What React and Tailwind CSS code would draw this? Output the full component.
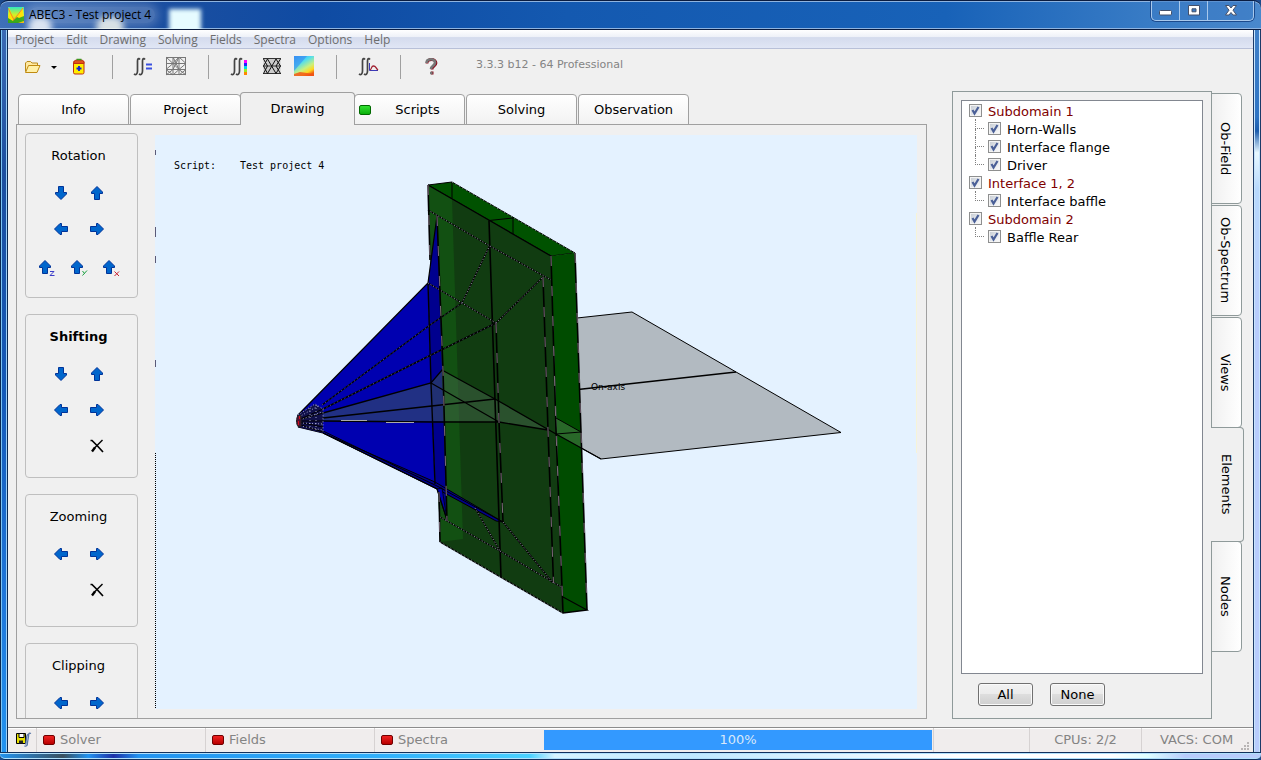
import { useState } from 'react';
import clsx from 'clsx';

const MENU = ['Project', 'Edit', 'Drawing', 'Solving', 'Fields', 'Spectra', 'Options', 'Help'];

const TABS = ['Info', 'Project', 'Drawing', 'Scripts', 'Solving', 'Observation'];

const SIDE_TABS = ['Ob-Field', 'Ob-Spectrum', 'Views', 'Elements', 'Nodes'];

const TREE = [
  { label: 'Subdomain 1', children: ['Horn-Walls', 'Interface flange', 'Driver'] },
  { label: 'Interface 1, 2', children: ['Interface baffle'] },
  { label: 'Subdomain 2', children: ['Baffle Rear'] },
];

const ALL_ITEMS = TREE.flatMap((g) => [g.label, ...g.children]);

/* ---------- icons ---------- */

const ARROWS = {
  up: '7,0.5 12.5,6 12.5,7.5 9.5,7.5 9.5,13.5 4.5,13.5 4.5,7.5 1.5,7.5 1.5,6',
  down: '7,13.5 12.5,8 12.5,6.5 9.5,6.5 9.5,0.5 4.5,0.5 4.5,6.5 1.5,6.5 1.5,8',
  left: '0.5,7 6,1.5 7.5,1.5 7.5,4.5 13.5,4.5 13.5,9.5 7.5,9.5 7.5,12.5 6,12.5',
  right: '13.5,7 8,1.5 6.5,1.5 6.5,4.5 0.5,4.5 0.5,9.5 6.5,9.5 6.5,12.5 8,12.5',
};

function Arrow({ dir }) {
  return (
    <svg width="14" height="14" viewBox="0 0 14 14">
      <polygon points={ARROWS[dir]} fill="#0066cc" stroke="#003399" />
    </svg>
  );
}

const AXIS = {
  z: { d: 'M11 11.5h4l-4 4h4.5', color: '#3c3cc8' },
  y: { d: 'M11.5 11l2 2.5M16 10.5l-4.500 5', color: '#1aa040' },
  x: { d: 'M11.5 11.5l4.5 4.5M16 11.5l-4.500 4.500', color: '#c82030' },
};

function AxisArrow({ axis }) {
  return (
    <svg width="18" height="18" viewBox="0 0 18 18" className="ml-0.5">
      <polygon points="6,0.5 11.5,6 11.5,7.5 8.5,7.5 8.5,13.5 3.5,13.5 3.5,7.5 0.5,7.5 0.5,6" fill="#0066cc" stroke="#003399" />
      <path d={AXIS[axis].d} fill="none" stroke={AXIS[axis].color} />
    </svg>
  );
}

function ResetIcon() {
  return (
    <svg width="14" height="14" viewBox="0 0 14 14" fill="none" stroke="#000">
      <path d="M0.500 1.500h1.500l5 5 6 6.500" strokeWidth="1.700" />
      <path d="M12.500 1L7 6.500l-3 3" strokeWidth="1.400" />
      <path d="M5 8.500l-3 4" strokeWidth="2.400" />
    </svg>
  );
}

function Integral() {
  return (
    <g fill="none" stroke="#444" strokeWidth="1.700">
      <path d="M8 3.500c-1.500-2-2.500-.5-2.500 1.500v10c0 3-1.500 4.500-3.500 3" />
      <path d="M13 3.500c-1.500-2-2.500-.5-2.500 1.500v10c0 3-1.500 4.500-3.500 3" />
    </g>
  );
}

function FolderIcon() {
  return (
    <svg width="22" height="22" viewBox="0 0 22 22" strokeLinejoin="round">
      <path d="M3.500 15.500V7l1.500-1.500h3.500L10 7h5.500v2.500" fill="#ffe9a0" stroke="#b98a1c" />
      <path d="M3.500 16.500L6.500 9.500h11.500l-3 7z" fill="#fff0a8" stroke="#c08a10" />
    </svg>
  );
}

function JarIcon() {
  return (
    <svg width="22" height="22" viewBox="0 0 22 22">
      <rect x="5.500" y="5" width="10.500" height="13" rx="1.500" fill="#ffee00" stroke="#c03010" />
      <path d="M6 6c0-3 10-3 10 0v1.500H6z" fill="#e05020" stroke="#c03010" />
      <path d="M8.500 3.500h5" stroke="#3a9a20" strokeWidth="1.500" />
      <path d="M11 10v5M8.500 12.500h5" stroke="#1020d0" strokeWidth="1.800" />
    </svg>
  );
}

function SolveIcon() {
  return (
    <svg width="22" height="22" viewBox="0 0 22 22">
      <Integral />
      <path d="M14 8.500h6M14 12.500h6" stroke="#3a50e0" strokeWidth="1.800" />
    </svg>
  );
}

function MeshIcon() {
  return (
    <svg width="22" height="22" viewBox="0 0 22 22" fill="none" stroke="#777">
      <path d="M1 1.500h20M1 7.500h20M1 13.500h20M1 18.500h20M1.500 1v18M8 1v18M14 1v18M20.500 1v18" />
      <path d="M1 1l7 6.500 6-6.500 7 6.500-7 6-6-6-7 6 7 5.500 6-5.500 7 5.500M1 19l7-5.500M14 1l-6 12.500M8 1l6 12.500M21 13.500l-7 5.500" />
    </svg>
  );
}

function FieldIcon() {
  return (
    <svg width="22" height="22" viewBox="0 0 22 22">
      <Integral />
      <rect x="15" y="4" width="3" height="3" fill="#f0f" />
      <rect x="15" y="7" width="3" height="3" fill="#22f" />
      <rect x="15" y="10" width="3" height="3" fill="#0dd" />
      <rect x="15" y="13" width="3" height="3" fill="#9e2" />
      <rect x="15" y="16" width="3" height="3" fill="#f80" />
    </svg>
  );
}

function TrianglesIcon() {
  return (
    <svg width="22" height="22" viewBox="0 0 22 22" stroke="#111" strokeWidth="1.200">
      <path d="M2.500 2.500h17v15h-17z" fill="#ccc" stroke="none" />
      <path d="M2 2.500h18M2 10h18M2 17.500h18" stroke="#333" />
      <path d="M2.500 3l4 7-4 7.500M2.500 10l4-7 8.500 14.500 4.500-7.500-4.500-7L6.500 17.500l-4-7.500M19.500 3L15 10l4.500 7.500" fill="none" strokeWidth="1" />
    </svg>
  );
}

function MapIcon() {
  return (
    <svg width="22" height="22" viewBox="0 0 22 22">
      <defs>
        <linearGradient id="map" x1="0.1" y1="0" x2="0.7" y2="1">
          <stop offset="0" stopColor="#3aa0f8" />
          <stop offset="0.350" stopColor="#50dcf0" />
          <stop offset="0.650" stopColor="#c8f080" />
          <stop offset="0.850" stopColor="#ffd820" />
          <stop offset="1" stopColor="#f06010" />
        </linearGradient>
      </defs>
      <rect x="1" y="0" width="20" height="20" fill="url(#map)" />
      <path d="M1 0h13L1 15z" fill="#3888f0" opacity="0.600" />
      <path d="M1 18l6-2 14 2v2H1z" fill="#f05018" opacity="0.800" />
    </svg>
  );
}

function SpectrumIcon() {
  return (
    <svg width="22" height="22" viewBox="0 0 22 22" fill="none">
      <Integral />
      <path d="M12.500 7v7.500H21" stroke="#3a3ab8" />
      <path d="M13 14c2-1 1-4 3.500-4s2 2 4.500 4" stroke="#a02030" strokeWidth="1.300" />
    </svg>
  );
}

function HelpIcon() {
  return (
    <svg width="22" height="22" viewBox="0 0 22 22" fill="none">
      <path d="M7 7.500c0-5.500 9-5 9-.5 0 3.500-4 3-4 6.500M11 17h2.500" stroke="#8a1020" strokeWidth="2.800" />
      <path d="M6.500 7c0-5 8.500-5 8.500-.5 0 3.500-4 3-4 6.500M10 17h2.500" stroke="#777" strokeWidth="2.600" />
    </svg>
  );
}

function AppIcon() {
  return (
    <svg width="16" height="16" viewBox="0 0 16 16">
      <defs>
        <linearGradient id="app" x1="0" y1="0" x2="0" y2="1">
          <stop offset="0" stopColor="#30e8c0" />
          <stop offset="0.500" stopColor="#d8f020" />
          <stop offset="1" stopColor="#f8b010" />
        </linearGradient>
      </defs>
      <rect width="16" height="16" fill="url(#app)" />
      <path d="M1 0l5 14L15 0v15H1z" fill="#ffe200" />
      <path d="M0 1l6 12M5 14L15 1" stroke="#f07030" strokeWidth="0.800" />
      <path d="M0 11l5 3 4-4 2 1 5-2v5l-6 2H0z" fill="#18a020" opacity="0.850" />
    </svg>
  );
}

function SaveIcon() {
  return (
    <svg width="16" height="16" viewBox="0 0 16 16">
      <path d="M0.500 1.500h9v10h-9z" fill="#e8e000" stroke="#000" />
      <path d="M3 1.500h5v4h-5z" fill="#fff" stroke="#000" />
      <path d="M3 8.500h4v3h-4z" fill="#222" />
      <path d="M15 1.500c-2-1-2.500 0-2.500 3l-1 6c0 3-1 4-3 3.500M12 2.500c-2 0-1.500 8-2.500 10" fill="none" stroke="#5a78a8" strokeWidth="1.300" />
    </svg>
  );
}

function Led({ color }) {
  return (
    <span
      className={clsx(
        'h-[10px] w-3 shrink-0 rounded-[2px] border',
        color === 'green'
          ? 'border-[#006a00] bg-linear-to-b from-[#30e030] to-[#08b008]'
          : 'border-[#700000] bg-linear-to-b from-[#f02020] to-[#b80000]',
      )}
    />
  );
}

/* ---------- window chrome ---------- */

function TitleBar() {
  return (
    <header className="relative flex h-[30px] shrink-0 items-start justify-between overflow-hidden rounded-t-lg border-t border-b border-[#0a1c40] bg-[linear-gradient(90deg,#3f70b8_0,#1c4fa0_12%,#0f4ba3_25%,#1459b0_45%,#1862b8_75%,#3a7dc6_92%,#4a88cc_100%)] shadow-[inset_0_1px_0_#8fb4e0,inset_0_-1px_0_#8fb4e0]">
      {/* blurred desktop icons behind the glass */}
      <span className="absolute top-4 left-7 h-5 w-6 rounded-full bg-white/80 blur-[3px]" />
      <span className="absolute top-4 left-24 h-5 w-7 rounded-full bg-[#fffff0]/80 blur-[3px]" />
      <span className="absolute top-2 left-[169px] h-6 w-8 bg-[#e6fbff] blur-[2px]" />
      <div className="relative flex items-center gap-[5px] pt-[6px] pl-2">
        <AppIcon />
        <h1 className="rounded-full bg-white/20 pr-1 font-['Open_Sans',sans-serif] text-[12px] leading-4 text-black shadow-[0_0_8px_4px_rgba(255,255,255,0.2)]">
          ABEC3 - Test project 4
        </h1>
      </div>
      <div className="relative mr-[7px] flex h-5 rounded-b-[5px] border border-t-0 border-[#a8c8ec] bg-[#3c7cc4]/60 shadow-[0_0_0_1px_#1c4a8c]">
        <button aria-label="Minimize" className="flex w-7 justify-center border-r border-[#a8c8ec] pt-[9px]">
          <svg width="13" height="6" viewBox="0 0 13 6"><rect x="0.500" y="0.500" width="12" height="4.500" rx="1" fill="#fff" stroke="#44506a" /></svg>
        </button>
        <button aria-label="Maximize" className="flex w-7 justify-center border-r border-[#a8c8ec] pt-1">
          <svg width="12" height="11" viewBox="0 0 12 11"><path d="M0.500 0.500h11v9.500h-11zM4 3.800v3h4v-3z" fillRule="evenodd" fill="#fff" stroke="#44506a" /></svg>
        </button>
        <button aria-label="Close" className="flex w-[45px] justify-center pt-1">
          <svg width="12" height="11" viewBox="0 0 12 11"><path d="M0.500 0.500h3.500l2 2.500 2-2.500h3.500L8 5.200l3.500 4.800H8L6 7.500 4 10H0.500L4 5.200z" fill="#fff" stroke="#44506a" /></svg>
        </button>
      </div>
    </header>
  );
}

function MenuBar() {
  return (
    <nav className="flex h-[19px] shrink-0 items-center gap-3 border-b border-[#b8c0d8] bg-[linear-gradient(180deg,#fff_0,#eef1f8_38%,#d4dbed_42%,#e0e6f5_100%)] pt-[2px] pl-[7px] font-['Open_Sans',sans-serif] text-[12px] leading-4 text-[#6d6d6d]">
      {MENU.map((item) => (
        <button key={item}>{item}</button>
      ))}
    </nav>
  );
}

function ToolButton({ label, children }) {
  return <button aria-label={label} className="flex shrink-0 items-center">{children}</button>;
}

function Separator() {
  return <span className="h-6 w-px shrink-0 bg-[#a0a0a0]" />;
}

function Toolbar() {
  return (
    <div className="flex h-[35px] shrink-0 items-center">
      <div className="flex w-[104px] items-center pl-[14px]">
        <ToolButton label="Open"><FolderIcon /></ToolButton>
        <button aria-label="Recent projects" className="flex w-6 justify-center pr-1 pt-[2px]">
          <svg width="6" height="3"><path d="M0 0h6L3 3z" /></svg>
        </button>
        <ToolButton label="Clear"><JarIcon /></ToolButton>
      </div>
      <Separator />
      <div className="flex w-[95px] gap-[11px] pl-[19px]">
        <ToolButton label="Solve"><SolveIcon /></ToolButton>
        <ToolButton label="Mesh"><MeshIcon /></ToolButton>
      </div>
      <Separator />
      <div className="flex w-[127px] justify-center gap-[10px] pr-[2px]">
        <ToolButton label="Calculate fields"><FieldIcon /></ToolButton>
        <ToolButton label="Field mesh"><TrianglesIcon /></ToolButton>
        <ToolButton label="Field map"><MapIcon /></ToolButton>
      </div>
      <Separator />
      <div className="flex w-[63px] justify-center pr-[2px]">
        <ToolButton label="Calculate spectra"><SpectrumIcon /></ToolButton>
      </div>
      <Separator />
      <div className="flex w-[75px] pl-[19px]">
        <ToolButton label="Help"><HelpIcon /></ToolButton>
      </div>
      <p className="pb-1 text-[11px] leading-4 text-[#848484]">3.3.3 b12 - 64 Professional</p>
    </div>
  );
}

function TabBar({ active, onSelect }) {
  return (
    <div role="tablist" className="relative z-10 -mb-px flex h-[33px] items-end pl-[2px]">
      {TABS.map((tab) => (
        <button
          key={tab}
          role="tab"
          aria-selected={tab === active}
          onClick={() => onSelect(tab)}
          className={clsx(
            'flex items-center rounded-t-[4px] border border-[#a0a0a0] text-[13px] leading-4',
            tab === active
              ? '-mr-px -ml-[2px] h-[33px] w-[115px] border-b-0 bg-[#f0f0f0]'
              : 'mr-px h-[31px] w-[111px] bg-linear-to-b from-white to-[#f2f2f2]',
          )}
        >
          {tab === 'Scripts' && <span className="flex pl-1"><Led color="green" /></span>}
          <span className="flex-1 text-center">{tab}</span>
        </button>
      ))}
    </div>
  );
}

/* ---------- left controls ---------- */

function Group({ title, bold, className, children }) {
  return (
    <section className={clsx('shrink-0 rounded-[4px] border border-[#bfbfbf] pr-[6px]', className)}>
      <h2 className={clsx('flex h-[41px] items-center justify-center pt-[3px] text-[13px] leading-4', bold && 'font-bold')}>{title}</h2>
      {children}
    </section>
  );
}

function Pad({ label, rows }) {
  return rows.map((row, i) => (
    <div key={i} className="flex justify-center">
      {row.map((key) => (
        <button key={key} aria-label={`${label} ${key}`} className="flex h-9 w-9 items-center justify-center">
          <Arrow dir={key} />
        </button>
      ))}
    </div>
  ));
}

function ResetButton({ label }) {
  return (
    <div className="flex justify-center pl-9">
      <button aria-label={label} className="flex h-9 w-9 items-center justify-center"><ResetIcon /></button>
    </div>
  );
}

function ViewControls() {
  return (
    <div className="flex w-[113px] shrink-0 flex-col gap-4 overflow-hidden">
      <Group title="Rotation" className="pb-[10px]">
        <Pad label="Rotate" rows={[['down', 'up'], ['left', 'right']]} />
        <div className="mt-1 flex justify-center">
          {['z', 'y', 'x'].map((axis) => (
            <button key={axis} aria-label={`Align ${axis}`} className="flex h-9 w-8 items-center justify-center">
              <AxisArrow axis={axis} />
            </button>
          ))}
        </div>
      </Group>
      <Group title="Shifting" bold className="pb-[13px]">
        <Pad label="Shift" rows={[['down', 'up'], ['left', 'right']]} />
        <ResetButton label="Reset shift" />
      </Group>
      <Group title="Zooming" className="pb-[18px]">
        <Pad label="Zoom" rows={[['left', 'right']]} />
        <ResetButton label="Reset zoom" />
      </Group>
      <Group title="Clipping" className="pb-14">
        <Pad label="Clip" rows={[['left', 'right']]} />
      </Group>
    </div>
  );
}

/* ---------- model drawing ---------- */

const DOTTED_EDGES = [
  'M428 210L489 245.500 551 280',
  'M428 283L462 303 496 323',
  'M462 303L489.500 246M496 323L543 277',
  'M440 517L500 551 563 588',
  'M475 508L500 551M503 522L553 583',
];

const RAYS = ['M322 405L430 325 462 303', 'M323 409L431 355 496 323'];

const LONG_EDGES = [
  'M437 216L443 370 447 521',
  'M543 277L548 430 553.500 583',
  'M496 323L499 422 503 522',
  'M551 256L556 430 563 613',
  'M575 253L581 432 587 610',
  'M428 185L430 260M439 492L440 542',
];

function Model() {
  return (
    <svg viewBox="155 135 762 574" preserveAspectRatio="xMinYMin meet" className="block h-full w-full" role="img" aria-label="Model drawing">
      {/* observation plane */}
      <path d="M577 318L632 312 841 432.500 601 459 556 434z" fill="#b2bac1" stroke="#000" />
      <path d="M578 389.500L736 372" stroke="#000" strokeWidth="1.300" />

      {/* baffle box */}
      <path d="M428 185L452 182 575 253 551 256z" fill="#005200" stroke="#000" />
      <path d="M551 256L575 253 587 610 563 613z" fill="#004c00" />
      <path d="M428 185L551 256 563 613 440 542z" fill="#113c11" />
      <path d="M428 185L452 199 463 539 440 542z" fill="#125012" />
      <g fill="none" stroke="#000">
        <path d="M428 185L551 256M440 542L563 613 587 610L563 597" strokeWidth="1.300" />
        <path d="M452 182V198M489 220.500L513 218V234" />
      </g>

      {/* horn walls */}
      <path d="M298 415L428 283 431 383 435 485 437 489 323 433 298 427z" fill="#0000b0" />
      <path d="M428 283L437 216 447 520 437 489 435 484 431 383z" fill="#00008e" />
      <path d="M323 433L435 482 503 522 496 521 437 489z" fill="#000088" stroke="#000" />
      <path d="M437 489L447 520 442 488z" fill="#0000a8" stroke="#000" strokeWidth="0.800" />

      {/* cut plane seen through the walls */}
      <path d="M323 413L431 383 442 370 495 399 548 430 499 422 433 421 323 421z" fill="#4a6a50" opacity="0.450" />
      <path d="M556 418L581 432 581.500 448 556 434z" fill="#fff" opacity="0.160" />

      <g fill="none" stroke="#000">
        <path d="M298 415L428 283 437 216M298 427L323 433 437 489 447 520" strokeWidth="1.200" />
        <path d="M428 283L431 383 435 484" strokeWidth="1.400" />
        <path d="M489 220.500L495 400 501 577" strokeWidth="1.600" />
        <path d="M323 413L431 383 442 370 495 399 556 434 601 459" strokeWidth="1.300" />
        <path d="M323 418L495 399M323 421L433 422H499L548 430M431 383L499 422" strokeWidth="1.300" />
        <path d="M556 418L581 432 556 434M323 431L437 486 503 522" />
      </g>

      <g fill="none">
        {DOTTED_EDGES.map((d) => (
          <g key={d}>
            <path d={d} stroke="#000" strokeWidth="1.400" />
            <path d={d} stroke="#c4b8dc" strokeWidth="0.800" strokeDasharray="1 2" />
          </g>
        ))}
        {RAYS.map((d) => (
          <g key={d}>
            <path d={d} stroke="#000" strokeWidth="1.400" />
            <path d={d} stroke="#a8a8dc" strokeWidth="0.600" strokeDasharray="1 3" />
          </g>
        ))}
        {LONG_EDGES.map((d) => (
          <g key={d}>
            <path d={d} stroke="#000" strokeWidth="1.600" />
            <path d={d} stroke="#d0b0cc" strokeWidth="0.600" strokeDasharray="10 20" />
          </g>
        ))}
        <path d="M341 420.500h26M386 422.500h28" stroke="#aaa" />
        <path d="M452 182L575 253M440 542L563 613" stroke="#cfe0d8" strokeWidth="0.700" strokeDasharray="1 3" />
      </g>

      {/* throat and driver */}
      <path d="M297 415L315 404 323 409 323 433 298 427z" fill="#10104a" />
      <g fill="none" stroke="#000">
        <path d="M298 420L323 409M298 420L323 413M298 421H323M298 422L323 427M298 424L323 432" />
      </g>
      <g fill="none" stroke="#c8ccec" strokeWidth="0.800" strokeDasharray="1 2">
        <path d="M298 415L315 404 323 409V433M299 417L318 406M300 420L322 412M300 423L323 424M300 426L323 430M310 408V428M316 405V430" />
      </g>
      <path d="M298 415.500c-2 3-2 8 0 11h3v-11z" fill="#501030" stroke="#222" />
      <path d="M299.500 416v3M298.500 421v4" stroke="#d01020" />

      {/* viewport border */}
      <path d="M155.500 453V709" stroke="#000" strokeDasharray="1 1" />
      <path d="M155.500 150v5M155.500 227v10M155.500 256v7M155.500 360v7" stroke="#5a5a78" />
      <path d="M916.500 213V453" stroke="#f6f4d8" />

      <g fontFamily="'DejaVu Sans Mono', monospace" fontSize="10">
        <text x="174" y="169">Script:</text>
        <text x="240" y="169">Test project 4</text>
      </g>
      <text x="591" y="390" fontFamily="'DejaVu Sans', sans-serif" fontSize="9">On-axis</text>
    </svg>
  );
}

/* ---------- element tree ---------- */

function CheckRow({ label, root, checked, onToggle }) {
  return (
    <label className={clsx('flex h-[18px] items-center gap-[6px] text-[13px] leading-4', root && 'text-[#800000]')}>
      <span className="grid h-[13px] w-[13px] place-items-center">
        <input
          type="checkbox"
          checked={checked}
          onChange={onToggle}
          className="peer col-start-1 row-start-1 h-[13px] w-[13px] appearance-none border border-[#8e8f8f] bg-linear-to-br from-[#c4cad2] to-white shadow-[inset_0_0_0_1px_#f4f4f4]"
        />
        <svg viewBox="0 0 13 13" className="pointer-events-none col-start-1 row-start-1 hidden h-[13px] w-[13px] peer-checked:block">
          <path d="M3.500 6L5.500 9.500 9.500 3" fill="none" stroke="#4a5f97" strokeWidth="2.200" />
        </svg>
      </span>
      <span className="pt-1">{label}</span>
    </label>
  );
}

function ElementTree({ checked, onToggle }) {
  return (
    <ul className="min-h-0 flex-1 overflow-hidden border border-[#828790] bg-white pl-[7px]">
      {TREE.map((group) => (
        <li key={group.label}>
          <CheckRow root label={group.label} checked={checked.includes(group.label)} onToggle={() => onToggle(group.label)} />
          <ul className="pl-[6px]">
            {group.children.map((child, i) => (
              <li key={child} className="flex">
                <span className="flex w-[13px] flex-col">
                  <span className="h-[10px] w-[9px] border-b border-l border-dotted border-[#808080]" />
                  {i < group.children.length - 1 && <span className="h-2 border-l border-dotted border-[#808080]" />}
                </span>
                <CheckRow label={child} checked={checked.includes(child)} onToggle={() => onToggle(child)} />
              </li>
            ))}
          </ul>
        </li>
      ))}
    </ul>
  );
}

function PushButton({ children, onClick }) {
  return (
    <button
      onClick={onClick}
      className="h-[23px] w-[55px] rounded-[3px] border border-[#707070] bg-[linear-gradient(180deg,#f2f2f2_0,#ebebeb_48%,#dddddd_50%,#cfcfcf_100%)] text-[13px] leading-4 shadow-[inset_0_0_0_1px_#fafafa]"
    >
      {children}
    </button>
  );
}

function SidePanel() {
  const [active, setActive] = useState('Elements');
  const [checked, setChecked] = useState(ALL_ITEMS);

  const toggle = (label) =>
    setChecked((prev) => (prev.includes(label) ? prev.filter((l) => l !== label) : [...prev, label]));

  return (
    <div className="mr-[9px] flex w-[292px] shrink-0 pt-[7px]">
      <div className="flex w-[260px] flex-col border border-[#8f9a9a] p-2">
        <ElementTree checked={checked} onToggle={toggle} />
        <div className="flex gap-[17px] pt-[9px] pb-1 pl-[17px]">
          <PushButton onClick={() => setChecked(ALL_ITEMS)}>All</PushButton>
          <PushButton onClick={() => setChecked([])}>None</PushButton>
        </div>
      </div>
      <div role="tablist" aria-orientation="vertical" className="-ml-px flex flex-col items-start pt-[2px]">
        {SIDE_TABS.map((tab) => (
          <button
            key={tab}
            role="tab"
            aria-selected={tab === active}
            onClick={() => setActive(tab)}
            className={clsx(
              'flex items-center justify-center rounded-r-[4px] border border-[#8f9a9a] pr-[3px] text-[13px] leading-4 [writing-mode:vertical-rl]',
              tab === active
                ? '-mt-[2px] -mb-px h-[115px] w-[33px] border-l-0 bg-[#f0f0f0]'
                : 'mb-px h-[111px] w-[31px] bg-linear-to-r from-[#f0f0f0] to-white',
            )}
          >
            {tab}
          </button>
        ))}
      </div>
    </div>
  );
}

/* ---------- status bar ---------- */

function StatusBar() {
  return (
    <footer className="flex h-[25px] shrink-0 items-stretch border-t border-[#8c8c8c] bg-[#f0eded] text-[13px] leading-4 text-[#848484] shadow-[inset_0_1px_0_#fff]">
      <div className="flex w-7 items-center justify-center pl-1"><SaveIcon /></div>
      {['Solver', 'Fields', 'Spectra'].map((name) => (
        <div key={name} className="flex w-[169px] items-center gap-[5px] border-l border-[#d6d2d2] pl-[6px]">
          <Led color="red" />
          {name}
        </div>
      ))}
      <div role="progressbar" aria-valuenow={100} className="my-[2px] ml-px flex flex-1 items-center justify-center bg-[#3399ff] text-[#d8e8fa]">
        100%
      </div>
      <div className="ml-px w-24 border-l border-[#d6d2d2]" />
      <div className="flex w-28 items-center justify-center border-l border-[#d6d2d2]">CPUs: 2/2</div>
      <div className="flex w-28 items-center justify-between border-l border-[#d6d2d2] pl-[18px]">
        VACS: COM
        <svg width="10" height="10" viewBox="0 0 10 10" className="mr-[2px] shrink-0 self-end" fill="#b8b4b4">
          <path d="M6 0h2v2H6zM3 3h2v2H3zM6 3h2v2H6zM0 6h2v2H0zM3 6h2v2H3zM6 6h2v2H6z" />
        </svg>
      </div>
    </footer>
  );
}

export default function App() {
  const [tab, setTab] = useState('Drawing');

  return (
    <div className="flex h-screen flex-col overflow-hidden bg-[#1c4a8c] font-['DejaVu_Sans',Verdana,sans-serif] text-black">
      <TitleBar />
      <div className="flex min-h-0 flex-1">
        <div className="w-2 shrink-0 border-r border-l border-[#0a2850] bg-[linear-gradient(180deg,#3a6ab4_0,#1c4fa0_20%,#1459b8_50%,#1f78dc_80%,#2293f0_100%)] shadow-[inset_1px_0_0_#7cc4f4,inset_-1px_0_0_#9cd0f8]" />
        <div className="flex min-w-0 flex-1 flex-col bg-[#f0f0f0]">
          <MenuBar />
          <Toolbar />
          <main className="flex min-h-0 flex-1 gap-[25px] pb-2 pl-2">
            <div className="flex min-w-0 flex-1 flex-col pt-2">
              <TabBar active={tab} onSelect={setTab} />
              <div className="flex min-h-0 flex-1 gap-[17px] border border-[#a0a0a0] pr-[9px] pl-2">
                <div className="flex min-h-0 overflow-hidden pt-2">
                  <ViewControls />
                </div>
                <div className="mt-[10px] mb-[9px] min-w-0 flex-1 bg-[#e4f2ff]">
                  <Model />
                </div>
              </div>
            </div>
            <SidePanel />
          </main>
          <StatusBar />
        </div>
        <div className="w-2 shrink-0 border-r border-l border-[#1c3a68] bg-[linear-gradient(180deg,#3f80c8_0,#2f74c4_12%,#1c5cac_14%,#e8f8ff_17%,#b8d8fc_22%,#b8ccfc_40%,#b8ccfc_100%)] shadow-[inset_1px_0_0_#c8e4fc,inset_-1px_0_0_#c8e4fc]" />
      </div>
      <div className="h-2 shrink-0 rounded-b-[5px] border-t border-b border-[#12305c] bg-[linear-gradient(90deg,#2293f0_0,#3a5060_5%,#2293f0_7%,#1c30a8_9%,#2293f0_11%,#30b0fc_30%,#48d0ff_42%,#d8f4ff_44%,#bfe8ff_55%,#fff_76%,#fff_88%,#e0ffff_91%,#b8ccfc_94%,#b8ccfc_100%)] shadow-[inset_0_1px_0_#b0e0fc,inset_0_-1px_0_#b0e0fc]" />
    </div>
  );
}
